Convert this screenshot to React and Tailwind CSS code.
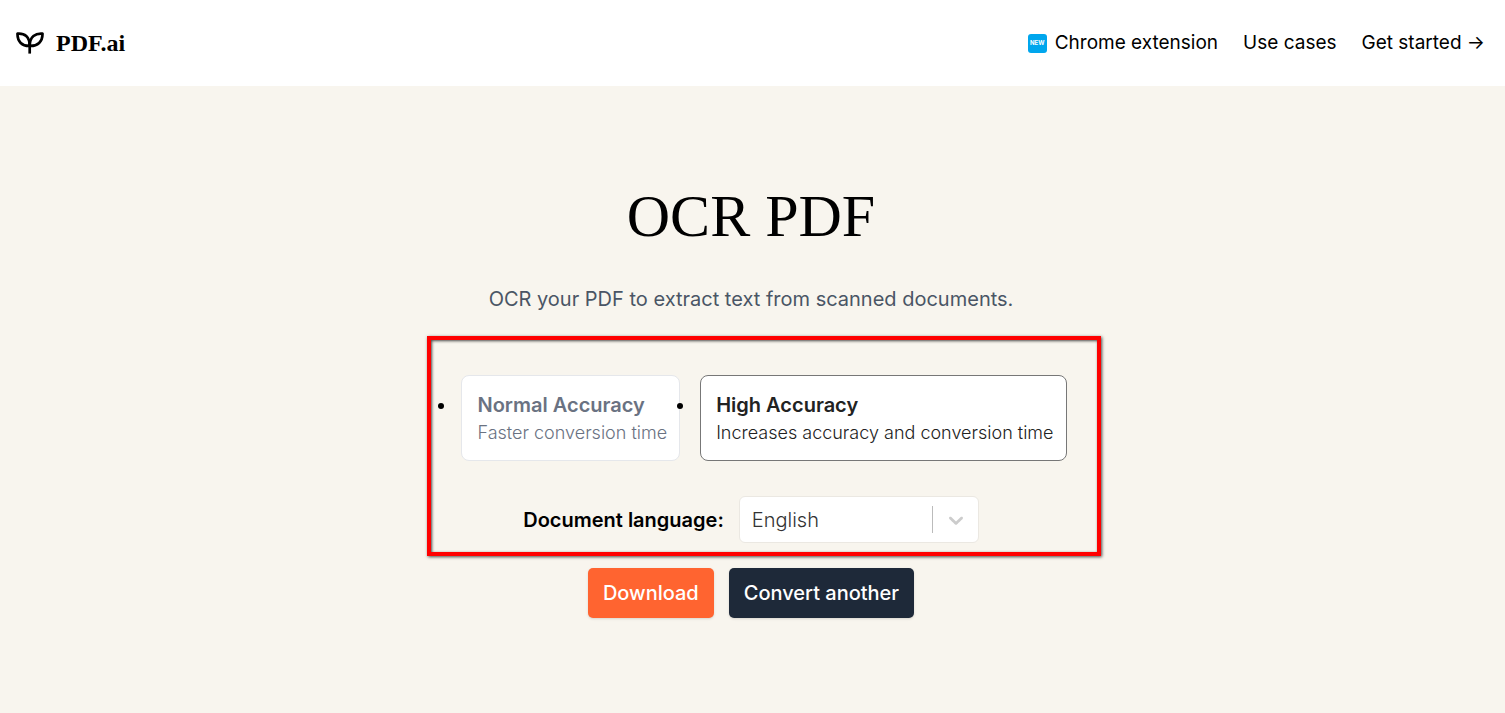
import React, { useState } from 'react';

const navLinks = [
    { label: 'Chrome extension', isNew: true },
    { label: 'Use cases' },
    { label: 'Get started →' },
];

const accuracyOptions = [
    { id: 'normal', title: 'Normal Accuracy', text: 'Faster conversion time' },
    { id: 'high', title: 'High Accuracy', text: 'Increases accuracy and conversion time' },
];

const Logo = () => (
    <svg width="28" height="22" viewBox="0 0 28 22" fill="none" stroke="#000" strokeWidth="2.7" strokeLinejoin="round" aria-hidden="true">
        <path d="M1.5 1.6C8.5 1 13.7 4.6 13.7 13.9C6.2 14.2 1.3 9.8 1.5 1.6Z" />
        <path d="M26.5 1.6C19.5 1 13.7 4.6 13.7 13.9C21.6 14.2 26.7 9.8 26.5 1.6Z" />
        <path d="M13.7 9V21.6" />
    </svg>
);

const Header = () => (
    <header className="bg-white flex items-center justify-between pl-4 pr-5 h-[86px]">
        <a href="#home" className="flex items-center gap-3 font-['Liberation_Serif',serif] text-2xl font-bold">
            <Logo />
            PDF.ai
        </a>
        <nav className="flex items-center gap-[25px] text-[19px] leading-7">
            {navLinks.map(link => (
                <a key={link.label} href="#" className="flex items-center gap-2">
                    {link.isNew && (
                        <span className="flex items-center justify-center size-[19px] rounded-[3px] bg-[#00a6ed] text-white text-[6px] leading-none font-bold">NEW</span>
                    )}
                    {link.label}
                </a>
            ))}
        </nav>
    </header>
);

const App = () => {
    const [accuracy, setAccuracy] = useState('high');
    const [language, setLanguage] = useState('English');

    return (
        <div className="min-h-screen flex flex-col font-['Inter',sans-serif] text-black">
            <Header />

            <main className="flex-1 bg-[#f8f5ee] flex flex-col items-center pt-[100px] pb-16 pr-[3px]">
                <h1 className="font-['Liberation_Serif',serif] text-6xl leading-[60px]">OCR PDF</h1>
                <p className="mt-[38px] text-xl leading-[30px] text-gray-600">OCR your PDF to extract text from scanned documents.</p>

                {/* OPTIONS */}
                <div className="relative mt-[61px] flex flex-col items-center">
                    <ul className="list-disc flex gap-4 pl-[22px] text-xl leading-[27px]">
                        {accuracyOptions.map(opt => (
                            <li key={opt.id}>
                                <label className={`block ml-1 rounded-lg border bg-white pt-4 pb-[14px] pl-[15px] pr-3 cursor-pointer ${accuracy === opt.id ? 'border-[#777] text-[#222]' : 'border-gray-200 text-gray-500'}`}>
                                    <input type="radio" name="accuracy" className="sr-only" checked={accuracy === opt.id} onChange={() => setAccuracy(opt.id)} />
                                    <span className="block font-semibold">{opt.title}</span>
                                    <span className="block text-lg leading-[27px] font-light">{opt.text}</span>
                                </label>
                            </li>
                        ))}
                    </ul>

                    <div className="mt-[35px] flex items-center gap-[15px] text-xl">
                        <label htmlFor="language" className="font-semibold">Document language:</label>
                        <div className="relative">
                            <select id="language" value={language} onChange={(e) => setLanguage(e.target.value)} className="appearance-none w-60 h-[47px] rounded-md border border-[#ebe8e2] bg-white px-3 font-light text-[#333]">
                                <option>English</option>
                                <option>French</option>
                                <option>German</option>
                                <option>Spanish</option>
                            </select>
                            <div className="pointer-events-none absolute inset-y-0 right-0 flex items-center">
                                <span className="w-px h-[27px] bg-[#bbb]" />
                                <svg className="mx-[11px]" width="24" height="24" viewBox="0 0 20 20" fill="#ccc" aria-hidden="true">
                                    <path d="M4.516 7.548c0.436-0.446 1.043-0.481 1.576 0l3.908 3.747 3.908-3.747c0.533-0.481 1.141-0.446 1.574 0 0.436 0.445 0.408 1.197 0 1.615-0.406 0.418-4.695 4.502-4.695 4.502-0.217 0.223-0.502 0.335-0.787 0.335s-0.57-0.112-0.789-0.335c0 0-4.287-4.084-4.695-4.502s-0.436-1.17 0-1.615z" />
                                </svg>
                            </div>
                        </div>
                    </div>

                    {/* highlight frame */}
                    <div className="pointer-events-none absolute -top-[39px] -bottom-[13px] -left-2 -right-[34px] border-4 border-[#ff0000] shadow-[1px_1px_3px_#000000b3,inset_1px_1px_3px_#000000b3]" />
                </div>

                {/* ACTIONS */}
                <div className="mt-[25px] flex gap-[15px] text-xl font-medium text-white">
                    <button className="h-[50px] px-[15px] rounded-[5px] bg-[#ff6430] shadow-sm">Download</button>
                    <button className="h-[50px] px-[15px] rounded-[5px] bg-gray-800 shadow-sm">Convert another</button>
                </div>
            </main>
        </div>
    );
};
export default App;
